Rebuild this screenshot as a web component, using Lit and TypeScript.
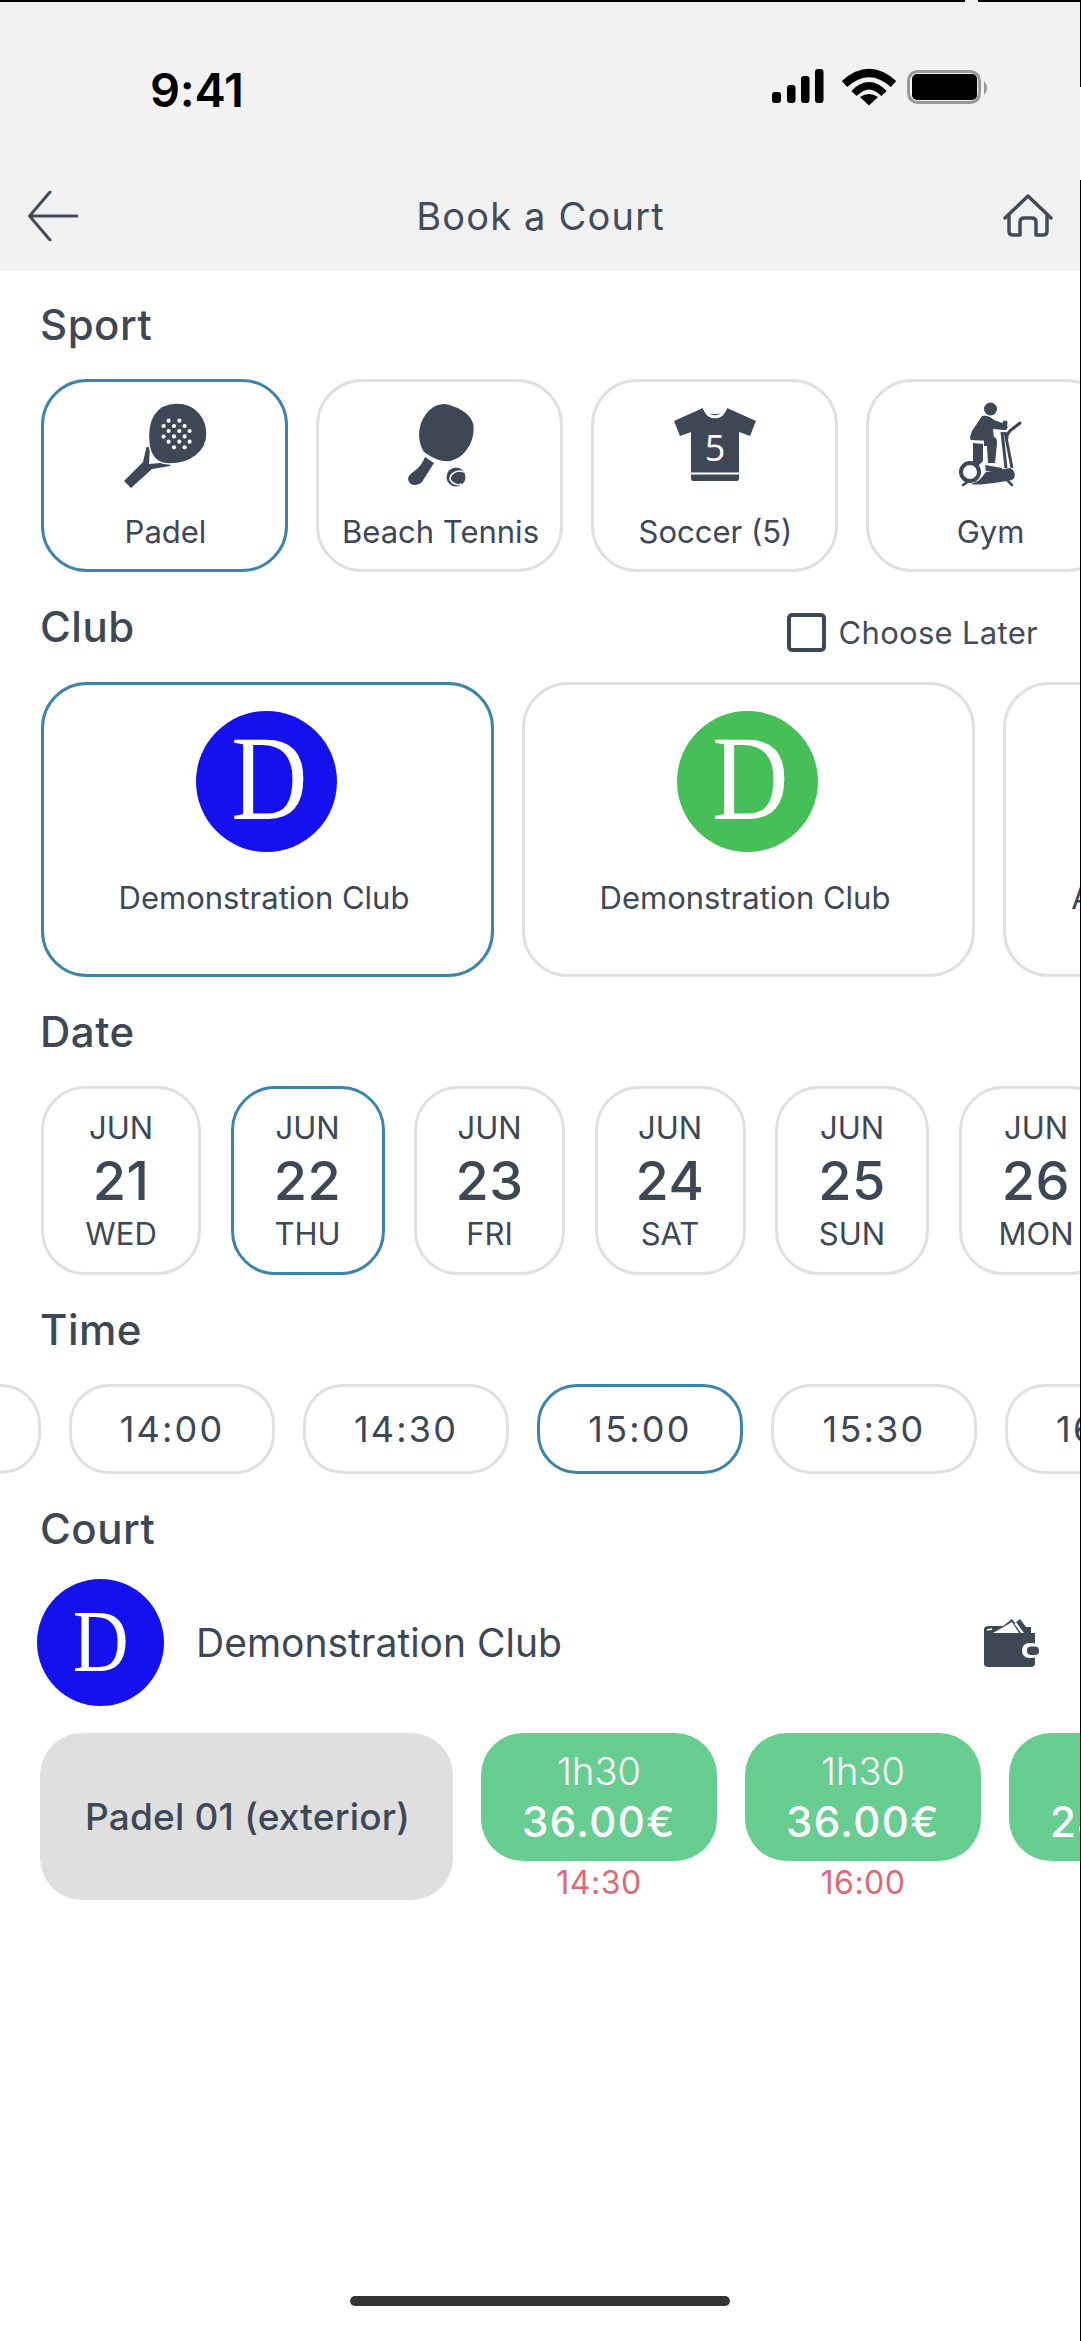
import { LitElement, html, css, svg } from "lit";
import { customElement } from "lit/decorators.js";

const box = (cx: number, body: unknown) => html`<svg class="ic" viewBox="${cx - 50} 400 100 92">${body}</svg>`;

const dots = [
  [168.6, 420.7], [179.3, 420.7], [163.6, 426], [174, 426], [184.6, 426], [168.6, 431], [179.3, 431], [189.6, 431],
  [163.6, 436.6], [174, 436.4], [184.6, 436.4], [168.6, 441.7], [179.3, 441.7], [189.6, 441.7], [174, 447.3], [184.6, 447.3],
];

const padel = box(165, svg`
  <path class="f" d="M124 481 L143 462 L146.500 447 L150 447 L149 464 L172 462 L170 466 L152 469 L131 488 Z"/>
  <path class="f wh" d="M149 445 C146 420 155 403 177 403 C196 403 207 418 207 434 C207 452 190 464 170 464 C158 464 151 457 149 445Z"/>
  ${dots.map(([x, y]) => svg`<circle cx=${x} cy=${y} r="2.1" fill="#fff"/>`)}
`);

const beach = box(439, svg`
  <path class="f" d="M424 457 L433 463 L421 482 C417 486 410 486 408 482 C406 478 408 475 412 472 C418 468 421 464 424 457Z"/>
  <path class="f wh" d="M422 452 C415 440 416 425 424 414 C431 405 440 402 448 404 C458 407 470 413 473 424 C475 438 468 455 452 461 C444 464 432 460 422 452Z"/>
  <circle class="f" cx="455" cy="477" r="9.500"/>
  <path d="M463 472 C456 469 449 474 449 479 C450 483 456 486 461 484" fill="none" stroke="#fff" stroke-width="1.500"/>
`);

const shirt = box(715, svg`
  <path class="f" d="M703 408 C706 416 724 416 727 408 L756 421 L750 436 L739 432 L739 479 Q739 481 737 481 L693 481 Q691 481 691 479 L691 432 L680 436 L674 421 Z"/>
  <path d="M704 407 C708 420 722 420 726 407" fill="none" stroke="#fff" stroke-width="3"/>
  <rect x="691" y="472.500" width="48" height="2" fill="#fff"/>
  <text class="num" x="715" y="461" text-anchor="middle">5</text>
`);

const gym = box(990, svg`
  <circle class="f" cx="990.500" cy="409" r="6.500"/>
  <path class="f" d="M982 416 C987 415 991 417 994 420 L1005 424 C1009 425 1008 431 1004 430 L993 429 L994 438 C994 441 992 441 990 441 L971 440 C969 438 971 434 972 431 Z"/>
  <path class="f" d="M984 436 L994 437 C997 438 997 441 997 444 L995 463 L988 463 L987 446 L984 446 Z"/>
  <path class="f" d="M973 443 L983 444 L983 461 L978 466 L973 463 Z"/>
  <path class="f" d="M985 465 L1002 468 L1002 471 L986 471 Z"/>
  <path fill="none" stroke="#3d4756" stroke-width="3" d="M1005 432 L1012 468 M1002 432 L1006 468"/>
  <path fill="none" stroke="#3d4756" stroke-width="3" stroke-linecap="round" d="M1007 438 C1006 432 1014 428 1020 423"/>
  <circle class="f" cx="1005" cy="423" r="2.500"/>
  <path class="f" d="M971 484 C978 486 1000 482 1012 480 C1017 477 1015 470 1010 468 L986 472 C983 476 979 482 971 484Z"/>
  <circle cx="970" cy="472" r="9" fill="none" stroke="#3d4756" stroke-width="4"/>
  <path fill="none" stroke="#3d4756" stroke-width="2.500" stroke-linecap="round" d="M963 485 L969 481 M1012 485 L1005 478"/>
`);

const sports = [
  { name: "Padel", icon: padel, on: true },
  { name: "Beach Tennis", icon: beach },
  { name: "Soccer (5)", icon: shirt },
  { name: "Gym", icon: gym },
];

const clubs = [
  { name: "Demonstration Club", color: "#1410ee", on: true },
  { name: "Demonstration Club", color: "#46bf58" },
  { name: "Arena Demonstration", color: "#1410ee" },
];

const dates = [
  { n: "21", d: "WED", w: 160 },
  { n: "22", d: "THU", w: 154, on: true },
  { n: "23", d: "FRI", w: 151 },
  { n: "24", d: "SAT", w: 151 },
  { n: "25", d: "SUN", w: 154 },
  { n: "26", d: "MON", w: 155 },
];

const times = [
  { t: "13:30" }, { t: "14:00" }, { t: "14:30" }, { t: "15:00", on: true }, { t: "15:30" }, { t: "16:00" },
];

const slots = [
  { d: "1h30", p: "36.00€", t: "14:30" },
  { d: "1h30", p: "36.00€", t: "16:00" },
  { d: "1h00", p: "24.00€", t: "17:00" },
];

@customElement("app-root")
export class AppRoot extends LitElement {
  static styles = css`
    :host {
      display: block;
      width: 1081px;
      height: 2341px;
      position: relative;
      overflow: hidden;
      background: #fff;
      color: #3d4756;
      font-family: Inter, "Noto Sans", sans-serif;
    }
    .page { width: 1080px; height: 2341px; display: flex; flex-direction: column; overflow: hidden; }
    .edge { position: absolute; background: #000; }
    .edge.top1 { left: 0; top: 0; width: 965px; height: 2px; }
    .edge.top2 { left: 978px; top: 0; width: 103px; height: 2px; }
    .edge.r1 { left: 1080px; top: 0; width: 1px; height: 87px; }
    .edge.r2 { left: 1080px; top: 180px; width: 1px; height: 2161px; }

    .header { height: 271px; flex: none; background: #f2f2f2; width: 1081px; }
    .status { height: 180px; display: flex; align-items: center; padding: 0 91px 0 150px; justify-content: space-between; box-sizing: border-box; }
    .clock { font-size: 47px; font-weight: 600; color: #000; letter-spacing: -0.3px; line-height: 1; margin-bottom: 2px; }
    .sicons { width: 218px; height: 45px; display: block; margin-bottom: 5px; }
    .nav { height: 72px; display: grid; grid-template-columns: 1fr auto 1fr; align-items: center; padding: 0 28px; }
    .title { font-size: 38px; line-height: 72px; font-weight: 400; letter-spacing: 1.2px; color: #434c5a; }
    .back { width: 50px; height: 50px; display: block; }
    .home { width: 50px; height: 44px; display: block; justify-self: end; }

    .content { padding-top: 32px; display: flex; flex-direction: column; flex: 1; }
    .label { font-size: 42px; font-weight: 500; line-height: 44px; margin: 0; padding-left: 40px; color: #3d4756; letter-spacing: 0.5px; }
    .row { display: flex; overflow: hidden; padding-left: 41px; flex: none; }
    .card { border: 3px solid #e0e0e0; box-sizing: border-box; background: #fff; flex: none; }
    .card.on { border-color: #3c84ab; }
    .mt33 { margin-top: 33px; }

    .sports { margin-top: 32px; gap: 28px; }
    .sport { width: 247px; height: 193px; border-radius: 46px; display: flex; flex-direction: column; align-items: center; padding-top: 18px; }
    .ic { width: 100px; height: 92px; display: block; flex: none; }
    .f { fill: #3d4756; }
    .wh { stroke: #fff; stroke-width: 1.5; }
    .num { fill: #fff; font-size: 36px; font-family: "Open Sans", sans-serif; }
    .sname { font-size: 31px; line-height: 40px; margin: 20px 0 0 2px; white-space: nowrap; }

    .clubhead { display: flex; justify-content: space-between; align-items: flex-start; height: 44px; padding-right: 42px; margin-top: 33px; }
    .later { display: flex; align-items: center; gap: 13px; font-size: 31px; letter-spacing: 0.3px; color: #434c5a; margin-top: 8px; }
    .cb { width: 39px; height: 39px; border: 4.5px solid #3d4756; border-radius: 5px; box-sizing: border-box; }
    .clubs { margin-top: 33px; gap: 28px; }
    .club { width: 453px; height: 295px; border-radius: 46px; display: flex; flex-direction: column; align-items: center; padding: 26px 2px 0 0; }
    .logo { border-radius: 50%; display: flex; align-items: center; justify-content: center; color: #fff; font-family: "Liberation Serif", serif; flex: none; box-sizing: border-box; }
    .logo span { display: block; transform: scaleX(0.88); }
    .logo.big { width: 141px; height: 141px; font-size: 120px; line-height: 1; padding: 0 0 5px 6px; }
    .logo.small { width: 127px; height: 127px; font-size: 88px; line-height: 1; padding-bottom: 2px; }
    .cname { font-size: 31px; line-height: 40px; margin: 26px 5px 0 0; white-space: nowrap; }

    .dates { margin-top: 32px; gap: 29.5px; }
    .date { height: 189px; border-radius: 44px; padding-top: 19px; display: flex; flex-direction: column; align-items: center; }
    .mon { font-size: 31px; line-height: 40px; }
    .day { font-size: 54px; line-height: 60px; font-weight: 500; margin-top: 3px; letter-spacing: 0.5px; }
    .dow { font-size: 31px; line-height: 40px; margin-top: 3px; }

    .times { margin-top: 32px; gap: 28px; padding-left: 0; }
    .time { width: 206px; height: 90px; border-radius: 40px; font-size: 36px; letter-spacing: 2.2px; display: flex; align-items: center; justify-content: center; }
    .time:first-child { margin-left: -165px; }

    .courthead { display: flex; align-items: center; margin-top: 28px; padding: 0 41px 0 37px; }
    .courtname { font-size: 39px; margin-left: 32px; flex: 1; }
    .wallet { width: 56px; height: 50px; display: block; }

    .courts { margin-top: 27px; gap: 28px; padding-left: 40px; align-items: flex-start; }
    .pad { width: 413px; height: 167px; flex: none; border-radius: 42px; background: #dfdfdf; display: flex; align-items: center; justify-content: center; padding-left: 2px; box-sizing: border-box; font-size: 37px; font-weight: 500; letter-spacing: 0.2px; }
    .slot { width: 236px; flex: none; display: flex; flex-direction: column; align-items: center; }
    .tag { width: 236px; height: 128px; border-radius: 42px; background: #68cd90; color: #fff; display: flex; flex-direction: column; align-items: center; padding-top: 16px; box-sizing: border-box; }
    .dur { font-size: 38px; line-height: 44px; font-weight: 300; }
    .price { font-size: 42px; line-height: 50px; font-weight: 500; margin-top: 4px; letter-spacing: 1.4px; }
    .when { font-size: 32px; line-height: 36px; margin-top: 4px; color: #dc6a75; letter-spacing: 0.5px; }

    .bar { width: 380px; height: 10px; border-radius: 5px; background: #333; margin: auto 0 35px 350px; flex: none; }
  `;

  render() {
    return html`
      <div class="page">
        <div class="header">
          <div class="status">
            <span class="clock">9:41</span>
            <svg class="sicons" viewBox="772 65 218 45">
              <rect x="772" y="92" width="9" height="11" rx="3" />
              <rect x="787" y="85" width="8.500" height="18" rx="3" />
              <rect x="801" y="76" width="8.500" height="27" rx="3" />
              <rect x="815" y="69" width="8.500" height="34" rx="3" />
              <path d="M844.500 84 Q869 62 893.500 84" fill="none" stroke="#000" stroke-width="8" />
              <path d="M854 93.500 Q869 78 884 93.500" fill="none" stroke="#000" stroke-width="7.500" />
              <path d="M869 105.500 L860 97 Q869 91 878 97 Z" />
              <rect x="908.500" y="71.500" width="71" height="31" rx="9" fill="none" stroke="#999" stroke-width="3" />
              <rect x="912" y="74" width="65" height="26" rx="5" />
              <path d="M984 81 Q990 88 984 95 Z" fill="#999" />
            </svg>
          </div>
          <div class="nav">
            <svg class="back" viewBox="28 191 50 50" fill="none" stroke="#434c5a" stroke-width="3" stroke-linecap="round">
              <path d="M50 192 L29.500 216 L50 240 M30 216 H77" />
            </svg>
            <div class="title">Book a Court</div>
            <svg class="home" viewBox="1003 195 50 44" fill="none" stroke="#434c5a" stroke-width="3.500" stroke-linecap="round" stroke-linejoin="round">
              <path d="M1005 219 L1028 197 L1051 219 M1009 216 V232 Q1009 236 1013 236 H1020 V223 Q1020 219 1024 219 H1032 Q1036 219 1036 223 V236 H1043 Q1047 236 1047 232 V216" />
            </svg>
          </div>
        </div>

        <div class="content">
          <h2 class="label">Sport</h2>
          <div class="row sports">
            ${sports.map(
              (s) => html`<div class="card sport ${s.on ? "on" : ""}">
                ${s.icon}
                <div class="sname">${s.name}</div>
              </div>`
            )}
          </div>

          <div class="clubhead">
            <h2 class="label">Club</h2>
            <div class="later"><span class="cb"></span><span>Choose Later</span></div>
          </div>
          <div class="row clubs">
            ${clubs.map(
              (c) => html`<div class="card club ${c.on ? "on" : ""}">
                <div class="logo big" style="background:${c.color}"><span>D</span></div>
                <div class="cname">${c.name}</div>
              </div>`
            )}
          </div>

          <h2 class="label mt33">Date</h2>
          <div class="row dates">
            ${dates.map(
              (d) => html`<div class="card date ${d.on ? "on" : ""}" style="width:${d.w}px">
                <div class="mon">JUN</div>
                <div class="day">${d.n}</div>
                <div class="dow">${d.d}</div>
              </div>`
            )}
          </div>

          <h2 class="label mt33">Time</h2>
          <div class="row times">
            ${times.map((t) => html`<div class="card time ${t.on ? "on" : ""}">${t.t}</div>`)}
          </div>

          <h2 class="label mt33">Court</h2>
          <div class="courthead">
            <div class="logo small" style="background:#1410ee"><span>D</span></div>
            <div class="courtname">Demonstration Club</div>
            <svg class="wallet" viewBox="983 1619 56 50">
              <path class="f" d="M984 1631 C984 1628 986 1627 989 1627 L1003 1627 L1012 1620 L1015 1624 L1020 1620 L1026 1628 L1031 1628 L1031 1634 L1035 1634 L1035 1665 C1035 1667 1033 1668 1031 1668 L988 1668 C986 1668 984 1667 984 1665 Z" />
              <path d="M993 1634 L1012 1623 L1019 1634 Z" fill="#fff" />
              <path d="M1016 1623 L1024 1634 L1021 1634 L1014.500 1625 Z" fill="#fff" />
              <path d="M987 1631 L992 1630" stroke="#fff" stroke-width="1.500" />
              <rect x="1022" y="1644" width="17" height="15" rx="7" fill="#fff" />
              <rect x="1027" y="1647.500" width="12" height="8.500" rx="4" class="f" />
            </svg>
          </div>
          <div class="row courts">
            <div class="pad">Padel 01 (exterior)</div>
            ${slots.map(
              (s) => html`<div class="slot">
                <div class="tag">
                  <div class="dur">${s.d}</div>
                  <div class="price">${s.p}</div>
                </div>
                <div class="when">${s.t}</div>
              </div>`
            )}
          </div>

          <div class="bar"></div>
        </div>
      </div>
      <div class="edge top1"></div>
      <div class="edge top2"></div>
      <div class="edge r1"></div>
      <div class="edge r2"></div>
    `;
  }
}
